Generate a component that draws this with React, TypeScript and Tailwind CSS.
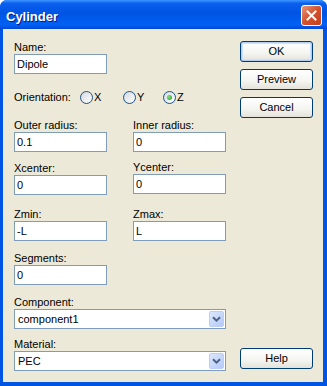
import React from "react";

function Label({ text, className = "" }: { text: string; className?: string }) {
  return <div className={`h-[13px] leading-[13px] ${className}`}>{text}</div>;
}

function TextBox({ value, className = "" }: { value: string; className?: string }) {
  return (
    <input
      readOnly
      value={value}
      className={`block h-[20px] w-[93px] border border-[#7F9DB9] bg-white px-[2px] text-[11px] leading-[18px] text-black outline-none ${className}`}
    />
  );
}

function Combo({ value }: { value: string }) {
  return (
    <div className="flex h-[20px] w-[212px] items-center border border-[#7F9DB9] bg-white pl-[3px] pr-[1px]">
      <span className="flex-1 leading-[18px]">{value}</span>
      <div className="flex h-[16px] w-[15px] items-center justify-center rounded-[2px] border border-[#BBCDF8] bg-[linear-gradient(135deg,#DCE7FD,#B3C9F7)]">
        <svg width="9" height="6" viewBox="0 0 9 6">
          <path d="M1 1.2 L4.5 4.6 L8 1.2" fill="none" stroke="#4D6185" strokeWidth="2" />
        </svg>
      </div>
    </div>
  );
}

function Radio({ label, checked, className = "" }: { label: string; checked?: boolean; className?: string }) {
  return (
    <div className={`flex items-center ${className}`}>
      <div className="flex h-[13px] w-[13px] items-center justify-center rounded-full border border-[#1C5180] bg-[linear-gradient(135deg,#D6D8DE,#FFFFFF)]">
        {checked && (
          <div className="h-[5px] w-[5px] rounded-full bg-[radial-gradient(circle_at_35%_35%,#7DE07D,#21A121)]" />
        )}
      </div>
      <span className="ml-[1px] leading-[13px]">{label}</span>
    </div>
  );
}

function Button({ text, primary, className = "" }: { text: string; primary?: boolean; className?: string }) {
  return (
    <div
      className={`flex h-[21px] w-[73px] items-center justify-center rounded-[3px] border border-[#003C74] bg-[linear-gradient(180deg,#FFFFFF_0%,#F4F4F0_60%,#E3E2DA_100%)] ${
        primary ? "shadow-[inset_0_0_0_1px_#B3CDF3,inset_0_0_0_2px_#CEE3FD]" : ""
      } ${className}`}
    >
      {text}
    </div>
  );
}

export default function App() {
  return (
    <div className="flex h-[386px] w-[327px] flex-col overflow-hidden rounded-t-[7px] bg-[#0054E3] font-['Liberation_Sans',Arial,sans-serif] text-[11px] text-black">
      <div className="flex h-[29px] shrink-0 items-start bg-[linear-gradient(180deg,#3D95FF_0%,#0A5FEF_12%,#0054E3_45%,#0061F5_85%,#0048D8_100%)]">
        <span className="ml-[6px] mt-[9px] text-[13px] font-bold leading-[15px] text-white [text-shadow:1px_1px_0_#0A1883]">
          Cylinder
        </span>
        <div className="ml-auto mr-[5px] mt-[5px] flex h-[21px] w-[21px] items-center justify-center rounded-[3px] border border-white bg-[linear-gradient(135deg,#E8967A_0%,#D2522E_50%,#C1401D_100%)]">
          <svg width="11" height="11" viewBox="0 0 11 11">
            <path d="M1.5 1.5 L9.5 9.5 M9.5 1.5 L1.5 9.5" stroke="white" strokeWidth="2" strokeLinecap="square" />
          </svg>
        </div>
      </div>

      <div className="mb-[4px] ml-[3px] mr-[4px] flex flex-1 bg-[#ECE9D8]">
        <div className="flex flex-col pl-[11px] pt-[12px]">
          <Label text="Name:" />
          <TextBox value="Dipole" />

          <div className="mt-[17px] flex h-[13px] items-center">
            <span className="w-[66px] leading-[13px]">Orientation:</span>
            <Radio label="X" className="w-[43px]" />
            <Radio label="Y" className="w-[40px]" />
            <Radio label="Z" checked />
          </div>

          <div className="mt-[15px] grid grid-cols-[119px_93px]">
            <div>
              <Label text="Outer radius:" />
              <TextBox value="0.1" />
            </div>
            <div>
              <Label text="Inner radius:" />
              <TextBox value="0" />
            </div>
          </div>

          <div className="mt-[10px] grid grid-cols-[119px_93px]">
            <div>
              <Label text="Xcenter:" />
              <TextBox value="0" />
            </div>
            <div className="-mt-[1px]">
              <Label text="Ycenter:" />
              <TextBox value="0" />
            </div>
          </div>

          <div className="mt-[13px] grid grid-cols-[119px_93px]">
            <div>
              <Label text="Zmin:" />
              <TextBox value="-L" />
            </div>
            <div>
              <Label text="Zmax:" />
              <TextBox value="L" />
            </div>
          </div>

          <div className="mt-[11px]">
            <Label text="Segments:" />
            <TextBox value="0" />
          </div>

          <div className="mt-[11px]">
            <Label text="Component:" />
            <Combo value="component1" />
          </div>

          <div className="mt-[9px]">
            <Label text="Material:" />
            <Combo value="PEC" />
          </div>
        </div>

        <div className="ml-[14px] flex flex-col pb-[13px] pt-[12px]">
          <Button text="OK" primary />
          <Button text="Preview" className="mt-[7px]" />
          <Button text="Cancel" className="mt-[7px]" />
          <Button text="Help" className="mt-auto" />
        </div>
      </div>
    </div>
  );
}
